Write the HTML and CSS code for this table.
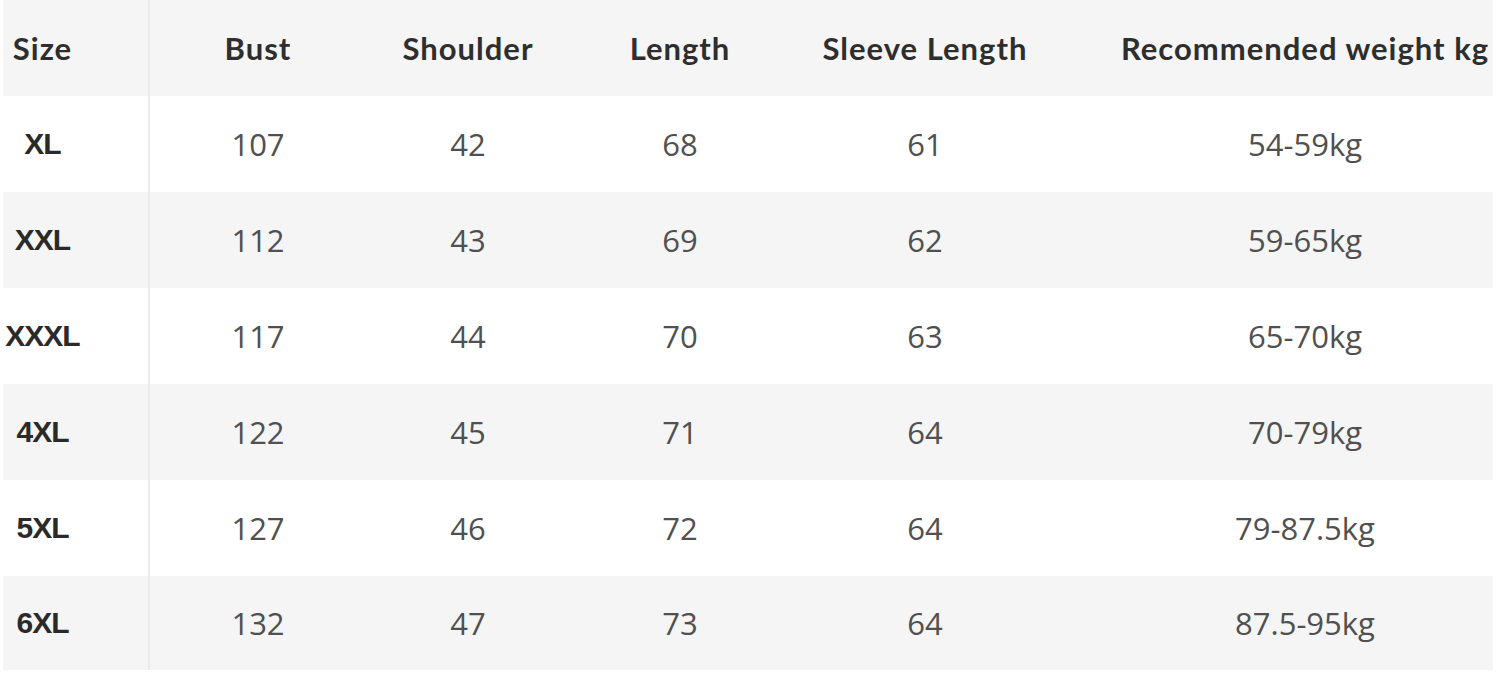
FILE: index.html
```html
<!DOCTYPE html>
<html lang="en">
<head>
<meta charset="utf-8">
<title>Size Chart</title>
<link rel="stylesheet" href="styles.css">
</head>
<body>
<div class="chart">
  <div class="row head">
    <div class="cell c1">Size</div>
    <div class="cell">Bust</div>
    <div class="cell">Shoulder</div>
    <div class="cell">Length</div>
    <div class="cell">Sleeve Length</div>
    <div class="cell c6">Recommended weight kg</div>
  </div>
  <div class="row">
    <div class="cell c1">XL</div>
    <div class="cell">107</div>
    <div class="cell">42</div>
    <div class="cell">68</div>
    <div class="cell">61</div>
    <div class="cell c6">54-59kg</div>
  </div>
  <div class="row alt">
    <div class="cell c1">XXL</div>
    <div class="cell">112</div>
    <div class="cell">43</div>
    <div class="cell">69</div>
    <div class="cell">62</div>
    <div class="cell c6">59-65kg</div>
  </div>
  <div class="row">
    <div class="cell c1">XXXL</div>
    <div class="cell">117</div>
    <div class="cell">44</div>
    <div class="cell">70</div>
    <div class="cell">63</div>
    <div class="cell c6">65-70kg</div>
  </div>
  <div class="row alt">
    <div class="cell c1">4XL</div>
    <div class="cell">122</div>
    <div class="cell">45</div>
    <div class="cell">71</div>
    <div class="cell">64</div>
    <div class="cell c6">70-79kg</div>
  </div>
  <div class="row">
    <div class="cell c1">5XL</div>
    <div class="cell">127</div>
    <div class="cell">46</div>
    <div class="cell">72</div>
    <div class="cell">64</div>
    <div class="cell c6">79-87.5kg</div>
  </div>
  <div class="row alt last">
    <div class="cell c1">6XL</div>
    <div class="cell">132</div>
    <div class="cell">47</div>
    <div class="cell">73</div>
    <div class="cell">64</div>
    <div class="cell c6">87.5-95kg</div>
  </div>
</div>
</body>
</html>
```

FILE: styles.css
```css
html, body {
  margin: 0;
  padding: 0;
  background: #ffffff;
}

.chart {
  padding-left: 3px;
  width: 1490px;
  display: flex;
  flex-direction: column;
}

.row {
  display: grid;
  grid-template-columns: 147px 216px 204px 220px 270px 433px;
  height: 96px;
  background: #ffffff;
  font-family: "Open Sans", "Liberation Sans", sans-serif;
  font-size: 31px;
  color: #505050;
}

.row.head,
.row.alt {
  background: #f5f5f5;
}

.row.last {
  height: 94px;
}

.cell {
  display: flex;
  align-items: center;
  justify-content: center;
}

.c1 {
  padding-right: 66px;
  border-right: 2px solid #ebebeb;
  font-family: "Liberation Sans", Arial, sans-serif;
  font-weight: bold;
  font-size: 30px;
  color: #2a2a2a;
  letter-spacing: -1px;
}

.c6 {
  padding-left: 57px;
}

.row.head .cell {
  font-family: Lato, "Liberation Sans", sans-serif;
  font-weight: bold;
  font-size: 31px;
  color: #2e2e2e;
  letter-spacing: 1px;
}
```
